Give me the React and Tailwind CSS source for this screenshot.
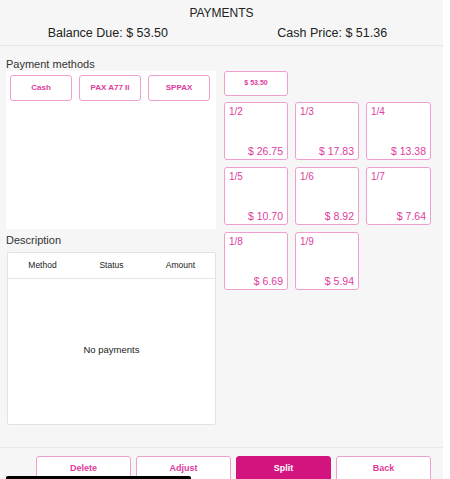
import React from 'react';

const methods = ['Cash', 'PAX A77 II', 'SPPAX'];

const splits = [
  { label: '1/2', amount: '$ 26.75' },
  { label: '1/3', amount: '$ 17.83' },
  { label: '1/4', amount: '$ 13.38' },
  { label: '1/5', amount: '$ 10.70' },
  { label: '1/6', amount: '$ 8.92' },
  { label: '1/7', amount: '$ 7.64' },
  { label: '1/8', amount: '$ 6.69' },
  { label: '1/9', amount: '$ 5.94' },
];

const actions = ['Delete', 'Adjust', 'Split', 'Back'];

export default function App() {
  return (
    <div className="w-[450px] h-[479px] bg-white flex overflow-hidden relative" style={{ fontFamily: '"Liberation Sans", Arial, sans-serif' }}>
      <div className="w-[443px] h-full bg-[#f6f6f6] flex flex-col">
        {/* Header */}
        <header className="h-[46px] border-b border-[#e6e6e6] flex flex-col items-center pt-[6px]">
          <h1 className="text-[12px] font-medium text-[#222] leading-[14px]">PAYMENTS</h1>
          <div className="w-full grid grid-cols-2 mt-[6px] text-[12.5px] text-[#222] leading-[15px]">
            <span className="text-center pr-[6px]">Balance Due: $ 53.50</span>
            <span className="text-center">Cash Price: $ 51.36</span>
          </div>
        </header>

        {/* Body */}
        <div className="flex-1 flex pl-[6px] pt-[12px]">
          <div className="w-[210px] flex flex-col">
            <p className="text-[11px] text-[#333] leading-[12px]">Payment methods</p>
            <div className="h-[158px] bg-white mt-[1px] flex gap-[7px] px-[4px] pt-[4px]">
              {methods.map(m => (
                <button key={m} className="w-[62px] h-[26px] rounded-[3px] border border-[#ee9fd0] bg-white text-[8px] font-bold text-[#dd3c9e]">
                  {m}
                </button>
              ))}
            </div>
            <p className="text-[11px] text-[#333] leading-[12px] mt-[5px]">Description</p>
            <div className="ml-[1px] mt-[6px] h-[173px] w-[209px] bg-white border border-[#e2e2e2] rounded-[2px] flex flex-col">
              <div className="h-[26px] border-b border-[#e6e6e6] grid grid-cols-3 items-center text-[8.5px] text-[#222]">
                <span className="text-center">Method</span>
                <span className="text-center">Status</span>
                <span className="text-center">Amount</span>
              </div>
              <div className="flex-1 flex items-center justify-center text-[9.5px] text-[#222] pb-[2px]">
                No payments
              </div>
            </div>
          </div>

          <div className="ml-[8px] pt-[13px] flex flex-col gap-[6px]">
            <button className="w-[64px] h-[25px] rounded-[3px] border border-[#ee9fd0] bg-white text-[7px] font-bold text-[#dd3c9e]">
              $ 53.50
            </button>
            <div className="grid grid-cols-[64px_64px_65px] gap-x-[7px] gap-y-[7px]">
              {splits.map(s => (
                <div key={s.label} className="h-[58px] rounded-[3px] border border-[#ee9fd0] bg-white flex flex-col justify-between px-[4px] pt-[3px] pb-[2px] text-[#dd3c9e]">
                  <span className="text-[10px] leading-[12px]">{s.label}</span>
                  <span className="text-[10.5px] font-medium leading-[12px] self-end">{s.amount}</span>
                </div>
              ))}
            </div>
          </div>
        </div>

        {/* Footer actions */}
        <div className="h-[32px] border-t border-[#e8e8e8] flex gap-[5px] pl-[36px] pt-[8px]">
          {actions.map(a => (
            <button
              key={a}
              className={`w-[95px] h-[26px] rounded-[3px] border text-[9px] font-bold ${
                a === 'Split'
                  ? 'bg-[#d3147f] border-[#d3147f] text-white'
                  : 'bg-white border-[#ee9fd0] text-[#dd3c9e]'
              }`}
            >
              {a}
            </button>
          ))}
        </div>
      </div>
      <div className="absolute left-[6px] bottom-0 w-[185px] h-[3px] bg-black rounded-t-[2px]" />
    </div>
  );
}
